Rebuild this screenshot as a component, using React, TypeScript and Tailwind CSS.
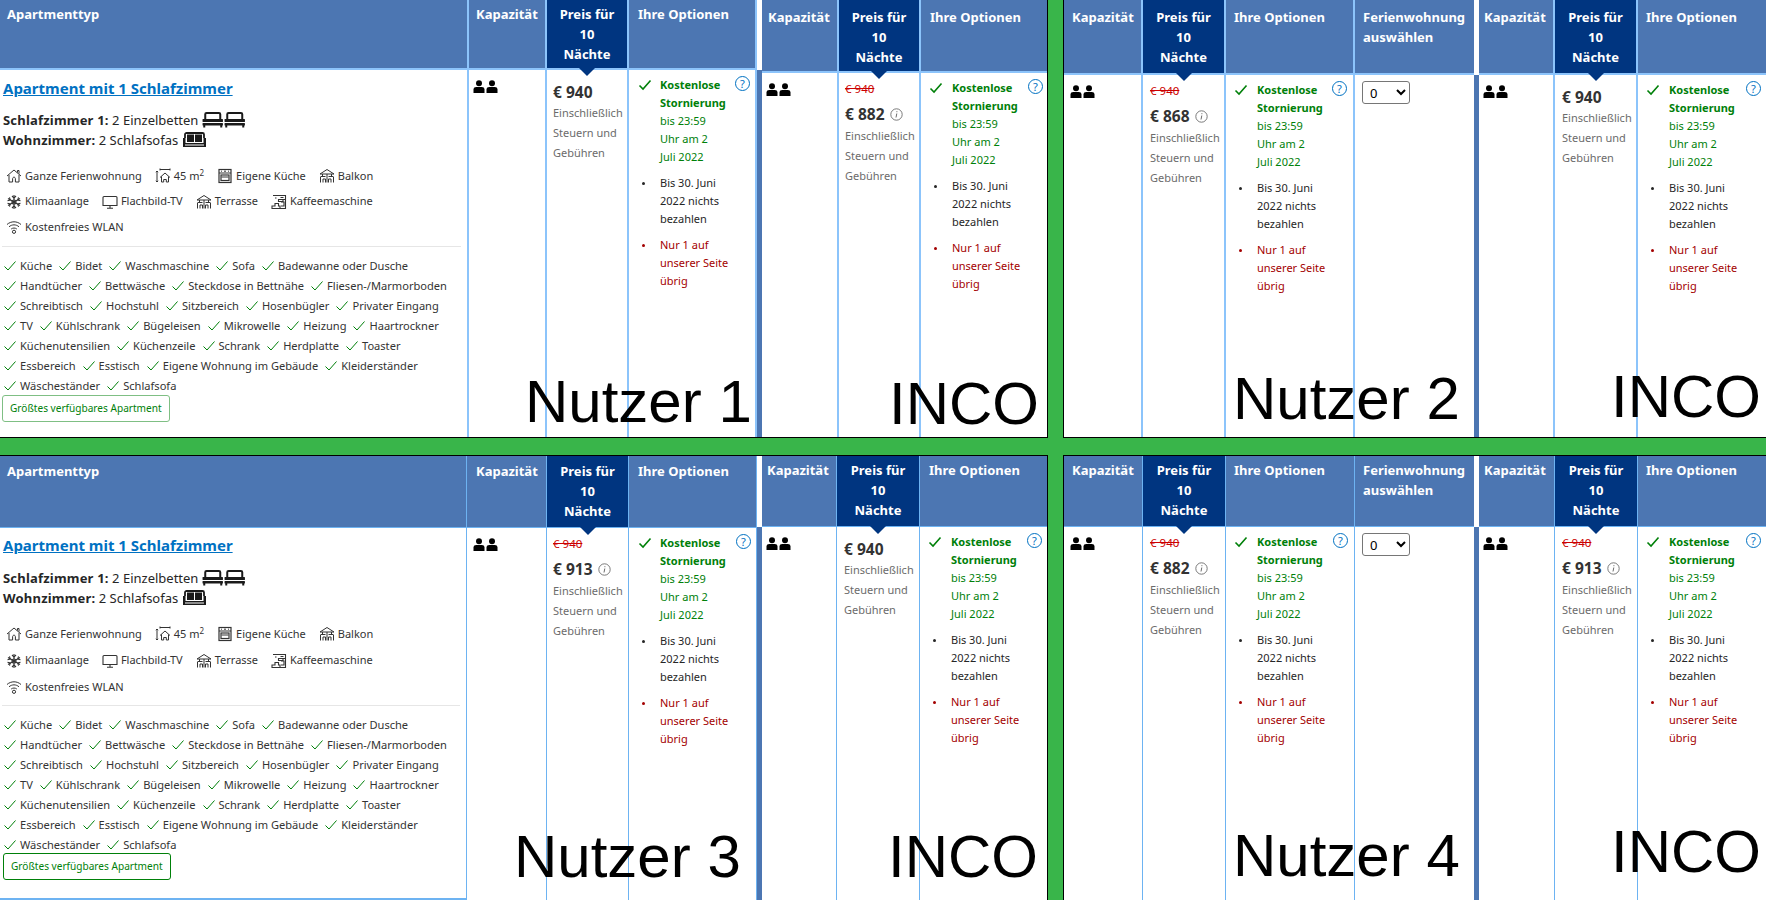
import React from "react";

const F = "font-['Noto_Sans',sans-serif]";

const Person = () => (
  <svg width="12" height="13" viewBox="0 0 12 13" className="block">
    <circle cx="6" cy="3.2" r="3" fill="#000" />
    <path d="M0.5 13V9.5C0.5 7.8 1.8 7 3.2 7H8.8C10.2 7 11.5 7.8 11.5 9.5V13Z" fill="#000" />
  </svg>
);

const Bed = () => (
  <svg width="21.5" height="16" viewBox="0 0 21 16" className="block">
    <path d="M3 8V2.2C3 1.4 3.6 1 4.3 1H16.7C17.4 1 18 1.4 18 2.2V8" fill="none" stroke="#1a1a1a" strokeWidth="2" />
    <rect x="0.3" y="7" width="20.4" height="3" rx="0.5" fill="#1a1a1a" />
    <rect x="0.3" y="11" width="20.4" height="2.6" rx="0.5" fill="#1a1a1a" />
    <rect x="1" y="13" width="2" height="2.5" fill="#1a1a1a" />
    <rect x="18" y="13" width="2" height="2.5" fill="#1a1a1a" />
  </svg>
);

const Sofa = () => (
  <svg width="25" height="16" viewBox="0 0 25 16" className="block">
    <path d="M3 6V2.5C3 1.5 3.8 1 4.6 1H20.4C21.2 1 22 1.5 22 2.5V6" fill="none" stroke="#1a1a1a" strokeWidth="1.8" />
    <rect x="5" y="2.5" width="7" height="7.5" fill="#1a1a1a" />
    <rect x="13" y="2.5" width="7" height="7.5" fill="#1a1a1a" />
    <path d="M1 6H3.5V11H21.5V6H24V15H1ZM3 12.6V13.6H22V12.6Z" fill="#1a1a1a" fillRule="evenodd" />
  </svg>
);

const S = "#333";
const icons: Record<string, React.ReactNode> = {
  house: (
    <path d="M1 8 8 2l7 6M3 7v7h3.6v-3.2c0-1 .6-1.6 1.4-1.6s1.4.6 1.4 1.6V14H13V7M11.5 4.5V2.5H13v3.2" fill="none" stroke={S} strokeWidth="1" />
  ),
  size: (
    <path d="M5 1.5H15M5 .5v2M15 .5v2M2 3v11M.8 4.2 2 3l1.2 1.2M.8 12.8 2 14l1.2-1.2M5 9.5 10 5l5 4.5M6.5 8.5V14h2.2v-2.5h2.6V14h2.2V8.5" fill="none" stroke={S} strokeWidth="1" />
  ),
  oven: (
    <g fill="none" stroke={S}>
      <rect x="2" y="1.5" width="12" height="13" strokeWidth="1.2" />
      <path d="M2 5h12" strokeWidth="1" />
      <path d="M4 3.2h1M7 3.2h2M11 3.2h1" strokeWidth="1" />
      <rect x="4" y="7" width="8" height="5.5" strokeWidth="1.2" />
      <path d="M4.5 9h7" strokeWidth="1" />
    </g>
  ),
  balcony: (
    <path d="M1 6 8 1.5 15 6H1ZM8 6v8.5M3.5 6v2M12.5 6v2M1.5 8.5h5M9.5 8.5h5M1.5 14.5V9M4 14.5v-3.5h2.5v3.5M14.5 14.5V9M12 14.5v-3.5H9.5v3.5" fill="none" stroke={S} strokeWidth="1" />
  ),
  snow: (
    <g fill="none" stroke={S} strokeWidth="1.1">
      <path d="M8 1v14M2 4.5l12 7M14 4.5l-12 7" />
      <path d="M6 2l2 2 2-2M6 14l2-2 2 2M1.5 6.8 4.2 6l-.7-2.7M14.5 9.2 11.8 10l.7 2.7M14.5 6.8 11.8 6l.7-2.7M1.5 9.2 4.2 10l-.7 2.7" />
      <circle cx="8" cy="8" r="2" />
    </g>
  ),
  tv: (
    <path d="M2 2.5h12a1 1 0 0 1 1 1v8H1v-8a1 1 0 0 1 1-1ZM8 11.5V14M5 14.2h6" fill="none" stroke={S} strokeWidth="1.1" />
  ),
  coffee: (
    <path d="M2 1.5h12.5v4H7.5v2H12V5.5M14.5 5.5v9H1v-2.5h3V9.5h3.5V12H9v2.5M4 4h1.5M9.5 3.5h3M10 8h3v4h-3" fill="none" stroke={S} strokeWidth="1.1" />
  ),
  wifi: (
    <g fill="none" stroke={S} strokeWidth="1">
      <path d="M1 5.5c4-3.6 10-3.6 14 0M3 7.8c3-2.6 7-2.6 10 0M5.2 10c1.7-1.3 3.9-1.3 5.6 0" />
      <circle cx="8" cy="12.8" r="1.6" />
    </g>
  ),
};

const Fac = ({ icon, children }: { icon: string; children: React.ReactNode }) => (
  <span className="flex items-center text-[11px] text-[#333]">
    <svg width="16" height="16" viewBox="0 0 16 16" className="mr-[3px] shrink-0">
      {icons[icon]}
    </svg>
    <span className="whitespace-nowrap">{children}</span>
  </span>
);

const Check = ({ w = 1 }: { w?: number }) => (
  <svg width="14" height="12" viewBox="0 0 14 12">
    <path d="M1.5 6.5 5 10 12.5 1.5" fill="none" stroke="#008009" strokeWidth={w} />
  </svg>
);

const amenities = [
  ["Küche", "Bidet", "Waschmaschine", "Sofa", "Badewanne oder Dusche"],
  ["Handtücher", "Bettwäsche", "Steckdose in Bettnähe", "Fliesen-/Marmorboden"],
  ["Schreibtisch", "Hochstuhl", "Sitzbereich", "Hosenbügler", "Privater Eingang"],
  ["TV", "Kühlschrank", "Bügeleisen", "Mikrowelle", "Heizung", "Haartrockner"],
  ["Küchenutensilien", "Küchenzeile", "Schrank", "Herdplatte", "Toaster"],
  ["Essbereich", "Esstisch", "Eigene Wohnung im Gebäude", "Kleiderständer"],
  ["Wäscheständer", "Schlafsofa"],
];

const lineTop = "border-[#8cc4fb]";

const HeadCell = ({
  label,
  h,
  pt,
  pl,
  navy,
  thin,
  w,
  last,
}: {
  label: React.ReactNode;
  h: number;
  pt: number;
  pl: number;
  navy?: boolean;
  thin?: boolean;
  w: number;
  last?: boolean;
}) => (
  <div
    className={`relative shrink-0 ${thin ? "border-b" : "border-b-2"} ${last ? "" : thin ? "border-r" : "border-r-2"} ${thin ? "border-[#6db3f2]" : lineTop} ${navy ? "bg-[#003580] text-center" : "bg-[#4c76b2]"} text-white font-bold text-[13px] leading-[20px]`}
    style={{ height: h, width: w, paddingTop: pt, paddingLeft: navy ? 0 : pl }}
  >
    {label}
    {navy && (
      <div className="absolute left-1/2 -translate-x-1/2 top-full -mt-[1px] z-10 w-0 h-0 border-l-[9px] border-r-[9px] border-t-[9px] border-l-transparent border-r-transparent border-t-[#003580]" />
    )}
  </div>
);

const Cell = ({
  w,
  thin,
  last,
  children,
  className = "",
}: {
  w: number;
  thin?: boolean;
  last?: boolean;
  children?: React.ReactNode;
  className?: string;
}) => (
  <div
    className={`flex-1 bg-white ${last ? "" : thin ? "border-r border-[#6db3f2]" : `border-r-2 ${lineTop}`} ${className}`}
    style={{ width: w }}
  >
    {children}
  </div>
);

const Col = ({ children }: { children: React.ReactNode }) => <div className="flex flex-col shrink-0">{children}</div>;

const Capacity = ({ left }: { left: number }) => (
  <div className="flex gap-[1px] pt-[10px]" style={{ paddingLeft: left }}>
    <Person />
    <Person />
  </div>
);

const Price = ({ old, price, left }: { old?: boolean; price: string; left: number }) => (
  <div style={{ paddingLeft: left }}>
    {old && <div className="pt-[7px] text-[11.5px] leading-[18px] text-[#cc0000] line-through">€ 940</div>}
    <div className={`flex items-center text-[15.5px] font-bold leading-[20px] text-[#333] ${old ? "mt-[6px]" : "pt-[12px]"}`}>
      € {price}
      {old && (
        <svg width="13" height="13" viewBox="0 0 13 13" className="ml-[5px]">
          <circle cx="6.5" cy="6.5" r="5.7" fill="none" stroke="#6b6b6b" strokeWidth="0.9" />
          <path d="M6.8 5.5 6 9.5M6.9 3.2v1" fill="none" stroke="#6b6b6b" strokeWidth="1" />
        </svg>
      )}
    </div>
    <div className={`text-[11px] leading-[20px] text-[#6b6b6b] whitespace-nowrap ${old ? "mt-[2px]" : "mt-[1px]"}`}>
      Einschließlich
      <br />
      Steuern und
      <br />
      Gebühren
    </div>
  </div>
);

const Options = ({ checkLeft, qRight }: { checkLeft: number; qRight: number }) => (
  <div className="relative pt-[6px] text-[11px] leading-[18px]">
    <div className="absolute top-[9px]" style={{ left: checkLeft }}>
      <Check w={1.6} />
    </div>
    <div className="absolute top-[6px] flex items-center justify-center w-[15px] h-[15px] rounded-full border border-[#0071c2] text-[#0071c2] text-[11px] leading-none" style={{ right: qRight }}>
      ?
    </div>
    <div className="pl-[31px] text-[#008009]">
      <div className="font-bold">
        Kostenlose
        <br />
        Stornierung
      </div>
      bis 23:59
      <br />
      Uhr am 2
      <br />
      Juli 2022
    </div>
    <div className="relative mt-[8px] pl-[31px] text-[#262626]">
      <span className="absolute left-[13px] top-[8px] w-[3px] h-[3px] rounded-full bg-[#262626]" />
      Bis 30. Juni
      <br />
      2022 nichts
      <br />
      bezahlen
    </div>
    <div className="relative mt-[8px] pl-[31px] text-[#a30000]">
      <span className="absolute left-[13px] top-[8px] w-[3px] h-[3px] rounded-full bg-[#a30000]" />
      Nur 1 auf
      <br />
      unserer Seite
      <br />
      übrig
    </div>
  </div>
);

const Preis = (
  <>
    Preis für
    <br />
    10
    <br />
    Nächte
  </>
);

type TableProps = {
  h: number;
  pt: number;
  thin?: boolean;
  widths: number[];
  kapText: number;
  kapIcon: number;
  priceLeft: number;
  optHead: number;
  check: number;
  q: number;
  price: string;
  old?: boolean;
  select?: boolean;
  last?: boolean;
};

const Table = ({ h, pt, thin, widths, kapText, kapIcon, priceLeft, optHead, check, q, price, old, select, last }: TableProps) => (
  <>
    <Col>
      <HeadCell label="Kapazität" h={h} pt={pt} pl={kapText} w={widths[0]} thin={thin} />
      <Cell w={widths[0]} thin={thin}>
        <Capacity left={kapIcon} />
      </Cell>
    </Col>
    <Col>
      <HeadCell label={Preis} h={h} pt={pt} pl={0} w={widths[1]} thin={thin} navy />
      <Cell w={widths[1]} thin={thin}>
        <Price old={old} price={price} left={priceLeft} />
      </Cell>
    </Col>
    <Col>
      <HeadCell label="Ihre Optionen" h={h} pt={pt} pl={optHead} w={widths[2]} thin={thin} last={last && !select} />
      <Cell w={widths[2]} thin={thin} last={last && !select}>
        <Options checkLeft={check} qRight={q} />
      </Cell>
    </Col>
    {select && (
      <Col>
        <HeadCell
          label={
            <>
              Ferienwohnung
              <br />
              auswählen
            </>
          }
          h={h}
          pt={pt}
          pl={8}
          w={widths[3]}
          thin={thin}
          last
        />
        <Cell w={widths[3]} last>
          <div className="pt-[6px] pl-[7px]">
            <select className="block w-[48px] h-[23px] border border-[#767676] rounded-[3px] bg-white text-[13px] text-black pl-[3px]">
              <option>0</option>
            </select>
          </div>
        </Cell>
      </Col>
    )}
  </>
);

const Divider = ({ h }: { h: number }) => (
  <div className="flex flex-col w-[5px] shrink-0">
    <div className="bg-white shrink-0" style={{ height: h }} />
    <div className="flex-1 bg-[#4c76b2]" />
  </div>
);

const ApartmentCol = ({ bottom }: { bottom?: boolean }) => (
  <Col>
    <HeadCell label="Apartmenttyp" h={bottom ? 72 : 70} pt={bottom ? 5 : 4} pl={7} w={bottom ? 467 : 469} thin={bottom} />
    <Cell w={bottom ? 467 : 469} thin={bottom} className={bottom ? "border-b-2" : ""}>
      <div className={bottom ? "pt-[5px]" : "pt-[6px]"}>
        <div className="pl-[3px] text-[15px] font-bold leading-[24px] text-[#0071c2] underline">Apartment mit 1 Schlafzimmer</div>
        <div className={`pl-[3px] text-[13px] leading-[20px] text-[#262626] ${bottom ? "mt-[11px]" : "mt-[10px]"}`}>
          <div className="flex items-center">
            <b className="tracking-[0.2px]">Schlafzimmer 1:</b>&nbsp;2 Einzelbetten
            <span className="flex ml-[4px]">
              <Bed />
              <Bed />
            </span>
          </div>
          <div className="flex items-center">
            <b className="tracking-[0.2px]">Wohnzimmer:</b>&nbsp;2 Schlafsofas
            <span className="ml-[4px]">
              <Sofa />
            </span>
          </div>
        </div>
        <div className={`pl-[6px] flex flex-col mt-[18px] ${bottom ? "gap-[10.5px]" : "gap-[9.5px]"}`}>
          <div className="flex gap-[13px] h-[16px]">
            <Fac icon="house">Ganze Ferienwohnung</Fac>
            <Fac icon="size">
              45 m<sup className="text-[8px]">2</sup>
            </Fac>
            <Fac icon="oven">Eigene Küche</Fac>
            <Fac icon="balcony">Balkon</Fac>
          </div>
          <div className="flex gap-[13px] h-[16px]">
            <Fac icon="snow">Klimaanlage</Fac>
            <Fac icon="tv">Flachbild-TV</Fac>
            <Fac icon="balcony">Terrasse</Fac>
            <Fac icon="coffee">Kaffeemaschine</Fac>
          </div>
          <div className="flex h-[16px]">
            <Fac icon="wifi">Kostenfreies WLAN</Fac>
          </div>
        </div>
        <div className={`ml-[2px] mr-[6px] h-[1px] bg-[#e6e6e6] ${bottom ? "mt-[10px]" : "mt-[11px]"}`} />
        <div className="mt-[9px] pl-[3px] text-[11.1px] leading-[20px] text-[#333]">
          {amenities.map((row, i) => (
            <div key={i} className="flex gap-[6px]">
              {row.map((a) => (
                <span key={a} className="flex items-center gap-[3px] whitespace-nowrap">
                  <Check />
                  {a}
                </span>
              ))}
            </div>
          ))}
        </div>
        <div
          className={`inline-block align-top h-[27px] rounded-[3px] border px-[7px] text-[10.1px] leading-[25px] text-[#008009] ${bottom ? "ml-[3px] -mt-[2px] border-[#008009]" : "ml-[2px] -mt-[1px] border-[#7fbf84]"}`}
        >
          Größtes verfügbares Apartment
        </div>
      </div>
    </Cell>
  </Col>
);

const Big = ({ className, children }: { className: string; children: React.ReactNode }) => (
  <div className={`absolute z-20 font-['Liberation_Sans',Arial,sans-serif] text-[60px] leading-[60px] text-black whitespace-nowrap ${className}`}>{children}</div>
);

export default function App() {
  return (
    <div className={`relative w-[1766px] h-[900px] overflow-hidden bg-[#39b54a] ${F}`}>
      <div className="flex h-[438px]">
        <div className="flex w-[1048px] border-r border-b border-black">
          <ApartmentCol />
          <Table h={70} pt={4} widths={[78, 82, 128]} kapText={7} kapIcon={4} priceLeft={6} optHead={9} check={9} q={5} price="940" />
          <Divider h={70} />
          <Table h={73} pt={7} widths={[77, 82, 126]} kapText={6} kapIcon={4} priceLeft={6} optHead={9} check={8} q={4} price="882" old last />
        </div>
        <div className="w-[15px]" />
        <div className="flex w-[703px] border-l border-b border-black">
          <Table h={75} pt={7} widths={[79, 83, 129, 119]} kapText={8} kapIcon={6} priceLeft={7} optHead={8} check={8} q={6} price="868" old select />
          <Divider h={75} />
          <Table h={75} pt={7} widths={[76, 83, 129]} kapText={5} kapIcon={4} priceLeft={7} optHead={8} check={8} q={6} price="940" last />
        </div>
      </div>
      <div className="h-[17px]" />
      <div className="flex h-[445px]">
        <div className="flex w-[1048px] border-r border-t border-black">
          <ApartmentCol bottom />
          <Table thin h={72} pt={5} widths={[80, 82, 128]} kapText={9} kapIcon={6} priceLeft={6} optHead={9} check={9} q={5} price="913" old />
          <Divider h={71} />
          <Table thin h={71} pt={4} widths={[75, 83, 127]} kapText={5} kapIcon={4} priceLeft={7} optHead={9} check={8} q={5} price="940" last />
        </div>
        <div className="w-[15px]" />
        <div className="flex w-[703px] border-l border-t border-black">
          <Table thin h={71} pt={4} widths={[79, 83, 129, 119]} kapText={8} kapIcon={6} priceLeft={7} optHead={8} check={8} q={6} price="882" old select />
          <Divider h={71} />
          <Table thin h={71} pt={4} widths={[76, 83, 129]} kapText={5} kapIcon={4} priceLeft={7} optHead={8} check={8} q={6} price="913" old last />
        </div>
      </div>
      <Big className="left-[525px] top-[372px]">Nutzer 1</Big>
      <Big className="left-[889px] top-[374px]">INCO</Big>
      <Big className="left-[1233px] top-[369px]">Nutzer 2</Big>
      <Big className="left-[1611px] top-[367px]">INCO</Big>
      <Big className="left-[514px] top-[827px]">Nutzer 3</Big>
      <Big className="left-[888px] top-[827px]">INCO</Big>
      <Big className="left-[1233px] top-[826px]">Nutzer 4</Big>
      <Big className="left-[1611px] top-[822px]">INCO</Big>
    </div>
  );
}
